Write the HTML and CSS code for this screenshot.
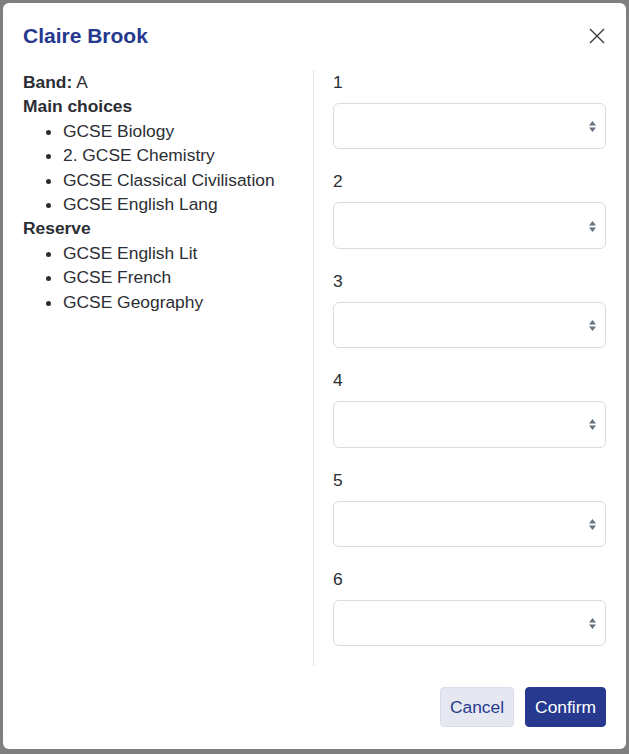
FILE: index.html
```html
<!DOCTYPE html>
<html lang="en">
<head>
    <meta charset="UTF-8">
    <title>Claire Brook – choices</title>
    <link rel="stylesheet" href="styles.css">
</head>
<body>

    <div class="modal">
        <div class="modal-header">
            <h2 class="modal-title">Claire Brook</h2>
            <button class="close" type="button" aria-label="Close">
                <svg width="16" height="16" viewBox="0 0 16 16">
                    <path d="M1 1 L15 15 M15 1 L1 15" stroke="#3a3a3a" stroke-width="1.4" fill="none"/>
                </svg>
            </button>
        </div>

        <div class="modal-body">
            <div class="summary">
                <div><b>Band:</b> A</div>
                <div><b>Main choices</b></div>
                <ul>
                    <li>GCSE Biology</li>
                    <li>2. GCSE Chemistry</li>
                    <li>GCSE Classical Civilisation</li>
                    <li>GCSE English Lang</li>
                </ul>
                <div><b>Reserve</b></div>
                <ul>
                    <li>GCSE English Lit</li>
                    <li>GCSE French</li>
                    <li>GCSE Geography</li>
                </ul>
            </div>

            <div class="picks">
                <div class="pick">
                    <label for="c1">1</label>
                    <div class="select-wrap">
                        <select id="c1"><option></option></select>
                        <svg class="arrows" width="7" height="11" viewBox="0 0 7 11"><path d="M3.5 0 L7 4.5 L0 4.5 Z M0 6.5 L7 6.5 L3.5 11 Z" fill="#66737f"/></svg>
                    </div>
                </div>
                <div class="pick">
                    <label for="c2">2</label>
                    <div class="select-wrap">
                        <select id="c2"><option></option></select>
                        <svg class="arrows" width="7" height="11" viewBox="0 0 7 11"><path d="M3.5 0 L7 4.5 L0 4.5 Z M0 6.5 L7 6.5 L3.5 11 Z" fill="#66737f"/></svg>
                    </div>
                </div>
                <div class="pick">
                    <label for="c3">3</label>
                    <div class="select-wrap">
                        <select id="c3"><option></option></select>
                        <svg class="arrows" width="7" height="11" viewBox="0 0 7 11"><path d="M3.5 0 L7 4.5 L0 4.5 Z M0 6.5 L7 6.5 L3.5 11 Z" fill="#66737f"/></svg>
                    </div>
                </div>
                <div class="pick">
                    <label for="c4">4</label>
                    <div class="select-wrap">
                        <select id="c4"><option></option></select>
                        <svg class="arrows" width="7" height="11" viewBox="0 0 7 11"><path d="M3.5 0 L7 4.5 L0 4.5 Z M0 6.5 L7 6.5 L3.5 11 Z" fill="#66737f"/></svg>
                    </div>
                </div>
                <div class="pick">
                    <label for="c5">5</label>
                    <div class="select-wrap">
                        <select id="c5"><option></option></select>
                        <svg class="arrows" width="7" height="11" viewBox="0 0 7 11"><path d="M3.5 0 L7 4.5 L0 4.5 Z M0 6.5 L7 6.5 L3.5 11 Z" fill="#66737f"/></svg>
                    </div>
                </div>
                <div class="pick">
                    <label for="c6">6</label>
                    <div class="select-wrap">
                        <select id="c6"><option></option></select>
                        <svg class="arrows" width="7" height="11" viewBox="0 0 7 11"><path d="M3.5 0 L7 4.5 L0 4.5 Z M0 6.5 L7 6.5 L3.5 11 Z" fill="#66737f"/></svg>
                    </div>
                </div>
            </div>
        </div>

        <div class="modal-footer">
            <button class="btn btn-cancel" type="button">Cancel</button>
            <button class="btn btn-confirm" type="button">Confirm</button>
        </div>
    </div>

</body>
</html>
```

FILE: styles.css
```css
* {
    box-sizing: border-box;
}

body {
    margin: 0;
    padding: 3px 3px 5px 3px;
    background-color: #7f7f7f;
    font-family: 'Liberation Sans', Arial, sans-serif;
    font-size: 17.4px;
    line-height: 24.4px;
    color: #2b2e33;
}

.modal {
    background-color: white;
    border-radius: 6px;
    width: 623px;
    height: 746px;
    display: flex;
    flex-direction: column;
}

.modal-header {
    display: flex;
    justify-content: space-between;
    align-items: center;
    padding: 18px 20px 0 20px;
}

.modal-title {
    margin: 0;
    font-size: 21px;
    line-height: 30px;
    font-weight: bold;
    color: #27398f;
}

.close {
    border: none;
    background: none;
    padding: 0;
    width: 16px;
    height: 16px;
    margin-right: 1px;
    cursor: pointer;
}

.close svg {
    display: block;
}

.modal-body {
    display: grid;
    grid-template-columns: 290px 1fr;
    padding: 19px 20px 0 20px;
}

.summary ul {
    margin: 0;
    padding-left: 40px;
}

.picks {
    border-left: 1px solid #dfe2e6;
    padding-left: 19px;
}

.pick {
    margin-bottom: 20px;
}

.pick label {
    display: block;
    margin-bottom: 8.5px;
}

.select-wrap {
    position: relative;
}

.select-wrap select {
    display: block;
    width: 100%;
    height: 46.5px;
    border: 1px solid #d6dde3;
    border-radius: 6px;
    background-color: white;
    appearance: none;
    -webkit-appearance: none;
    font-family: inherit;
    font-size: inherit;
}

.select-wrap .arrows {
    position: absolute;
    right: 10px;
    top: 50%;
    margin-top: -5px;
    pointer-events: none;
}

.modal-footer {
    display: flex;
    justify-content: flex-end;
    gap: 11px;
    padding: 21px 20px 0 20px;
}

.btn {
    font-family: inherit;
    font-size: 17.4px;
    line-height: 24.4px;
    padding: 6.5px 9px;
    border-radius: 4px;
    cursor: pointer;
}

.btn-cancel {
    background-color: #e5e8f1;
    border: 1px solid #d9dde9;
    color: #27398f;
}

.btn-confirm {
    background-color: #26398f;
    border: 1px solid #26398f;
    color: white;
}
```
